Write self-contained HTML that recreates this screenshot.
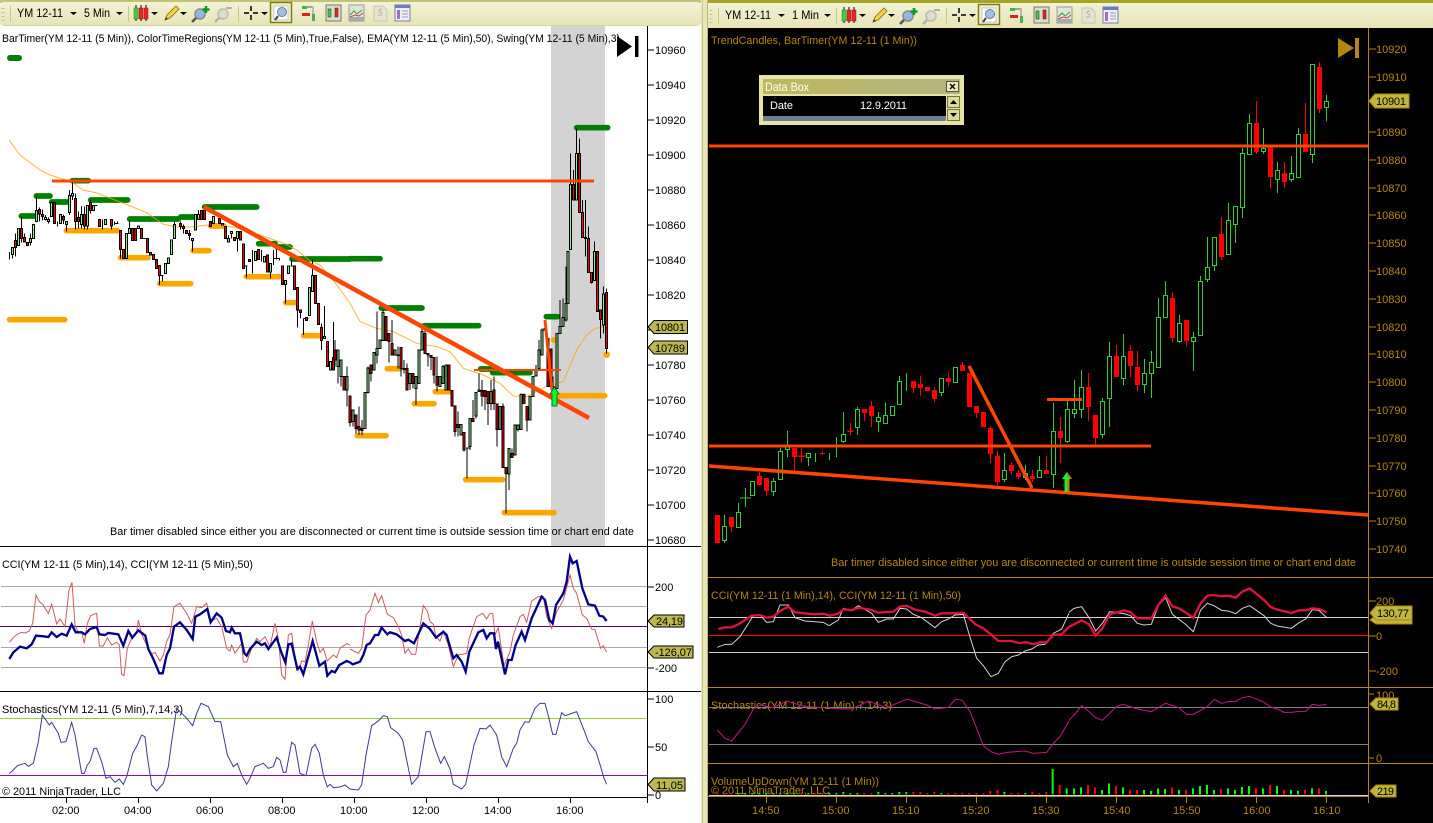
<!DOCTYPE html>
<html><head><meta charset="utf-8"><title>Charts</title>
<style>
html,body{margin:0;padding:0;background:#fff;width:1433px;height:823px;overflow:hidden}
svg{display:block}
text{font-family:"Liberation Sans",sans-serif;font-size:11px}
.g text{fill:#b8860b}
.k text{fill:#000}
.t text{font-size:12px}
</style></head><body>
<svg width="1433" height="823" viewBox="0 0 1433 823" xmlns="http://www.w3.org/2000/svg">
<defs>
<linearGradient id="tb" x1="0" y1="0" x2="0" y2="1"><stop offset="0" stop-color="#f3f2d6"/><stop offset="1" stop-color="#e6e4b6"/></linearGradient>
<linearGradient id="ttl" x1="0" y1="0" x2="1" y2="0"><stop offset="0" stop-color="#bdb95a"/><stop offset="1" stop-color="#b4b383"/></linearGradient>
<g id="tools">
<path d="M3 8v1M3 12v1M3 16v1M3 20v1" stroke="#c4c27e" stroke-width="3" fill="none"/>
<path d="M10.500 6V22M128.500 6V22M238.500 6V22" stroke="#c9c78c" fill="none"/>
<path d="M70 12h7l-3.500 3zM116 12h7l-3.500 3zM151 12h7l-3.500 3zM180 12h7l-3.500 3zM261 12h7l-3.500 3z" fill="#000"/>
<path d="M136 5V21M141 5V21M146 5V21" stroke="#000"/>
<rect x="134" y="8" width="4" height="11" fill="#3fd23f" stroke="#1a7a1a" stroke-width=".5"/><rect x="139" y="8" width="4" height="11" fill="#ee2222" stroke="#7a1a1a" stroke-width=".5"/><rect x="144" y="8" width="4" height="11" fill="#ee2222" stroke="#7a1a1a" stroke-width=".5"/>
<path d="M165 20l2-5 9-9 3 3-9 9z" fill="#f5d33a" stroke="#8a6a10" stroke-width=".8"/><path d="M165 20l1-3 2 2z" fill="#333"/>
<circle cx="200" cy="14" r="5" fill="#8fb8e8" stroke="#8a8a8a" stroke-width="1.500"/><path d="M196 18l-4 4" stroke="#555" stroke-width="2.500"/><path d="M206 6v7M202.500 9.500h7" stroke="#0a9a2a" stroke-width="2.500"/>
<circle cx="223" cy="14" r="5" fill="#dcdcd0" stroke="#bcbcb0" stroke-width="1.500"/><path d="M219 18l-4 4" stroke="#b0b0a8" stroke-width="2.500"/><path d="M226 8h6" stroke="#b0b0a8" stroke-width="2"/>
<path d="M244 13h5M253 13h5M251 6v5M251 15v5" stroke="#000" stroke-width="1.500"/>
<rect x="270.500" y="2.500" width="21" height="20" fill="#efeedd" stroke="#808000" stroke-width="1.500"/>
<rect x="274" y="6" width="14" height="14" fill="#fff" stroke="#aaa" stroke-width=".6"/><circle cx="282" cy="12" r="4.500" fill="#9fc0ea" stroke="#777"/><path d="M278 16l-3 4" stroke="#444" stroke-width="2"/>
<rect x="302" y="6" width="5" height="3" fill="#3fb83f"/><path d="M307 7h5" stroke="#555"/><rect x="302" y="13" width="8" height="3" fill="#dd2222"/><rect x="312" y="14" width="3" height="7" fill="#3fb83f"/><path d="M313 6V21" stroke="#888"/>
<rect x="326" y="5" width="15" height="16" fill="#dcdcc8" stroke="#777"/><rect x="328" y="9" width="3" height="8" fill="#3fd23f" stroke="#222" stroke-width=".5"/><rect x="335" y="8" width="3" height="9" fill="#ee2222" stroke="#222" stroke-width=".5"/>
<rect x="349" y="5" width="15" height="16" fill="#dfe6d8" stroke="#999"/><path d="M350 15l4-4 3 3 5-4" stroke="#3a9a3a" fill="none"/><path d="M350 17l5-2 4 1 4-3" stroke="#cc4444" fill="none"/><rect x="349" y="17" width="15" height="4" fill="#aaa"/>
<path d="M374 6h9l4 4v11h-13z" fill="#e5e4d2" stroke="#c6c6b4"/><path d="M382 9.500c-3-1-4 1-2 2.500 3 1 2 4-2 3" stroke="#bcbcaa" fill="none" stroke-width="1.300"/>
<rect x="395" y="5" width="15" height="16" fill="#eef0ff" stroke="#7a7aa8"/><rect x="395" y="5" width="15" height="3" fill="#6a7ac8"/><rect x="397" y="10" width="3" height="9" fill="#a070c8"/><path d="M402 11h6M402 14h6M402 17h6" stroke="#99a"/>
</g>
</defs>

<!-- base -->
<rect width="1433" height="823" fill="#fff"/>
<rect x="701" width="7" height="823" fill="#e8e6b8"/>
<rect x="702" width="1" height="823" fill="#c9c68a"/><rect x="707" width="1" height="823" fill="#bdb76b"/>
<rect x="708" width="725" height="823" fill="#000"/>

<!-- left toolbar -->
<rect width="701" height="3" fill="#c4c274"/>
<rect y="2" width="701" height="24" rx="4" fill="url(#tb)"/>
<path d="M4 25.500H697" stroke="#d8d6a0"/>
<use href="#tools"/>
<g class="k t"><text x="17" y="17" textLength="46" lengthAdjust="spacingAndGlyphs">YM 12-11</text><text x="84" y="17" textLength="26" lengthAdjust="spacingAndGlyphs">5 Min</text></g>

<!-- right toolbar -->
<rect x="708" width="725" height="3" fill="#a8a428"/>
<rect x="708" y="3" width="725" height="25" fill="url(#tb)"/>
<use href="#tools" x="708" y="2"/>
<g class="k t"><text x="725" y="19" textLength="46" lengthAdjust="spacingAndGlyphs">YM 12-11</text><text x="792" y="19" textLength="27" lengthAdjust="spacingAndGlyphs">1 Min</text></g>
<rect x="708" y="28" width="725" height="795" fill="#000"/>

<!-- LEFT CHART -->
<rect x="551" y="26" width="54" height="520" fill="#d3d3d3"/>
<g class="k">
<text x="2" y="42" textLength="618" lengthAdjust="spacingAndGlyphs">BarTimer(YM 12-11  (5 Min)), ColorTimeRegions(YM 12-11  (5 Min),True,False), EMA(YM 12-11  (5 Min),50), Swing(YM 12-11  (5 Min),3)</text>
<text x="110" y="535" textLength="524" lengthAdjust="spacingAndGlyphs">Bar timer disabled since either you are disconnected or current time is outside session time or chart end date</text>
<text x="2" y="568" textLength="251" lengthAdjust="spacingAndGlyphs">CCI(YM 12-11 (5 Min),14), CCI(YM 12-11 (5 Min),50)</text>
<text x="2" y="713" textLength="181" lengthAdjust="spacingAndGlyphs">Stochastics(YM 12-11 (5 Min),7,14,3)</text>
<text x="2" y="795" textLength="119" lengthAdjust="spacingAndGlyphs">© 2011 NinjaTrader, LLC</text>
</g>
<path d="M617 36l15 10.500-15 10.500z M635 36h3.500v21h-3.500z" fill="#000"/>
<path d="M10 58H19" stroke="#008000" stroke-width="6" stroke-linecap="round"/>

<!-- panel lines -->
<path d="M0 546.500H701M0 691.500H701M0 797.500H648M647.500 26V803" stroke="#000" fill="none"/>
<path d="M647 50h7M647 85h7M647 120h7M647 155h7M647 190h7M647 225h7M647 260h7M647 295h7M647 330h7M647 365h7M647 400h7M647 435h7M647 470h7M647 505h7M647 540h7M647 587h7M647 668h7M647 699h7M647 747h7M647 795h7M66.500 797v6M138.500 797v6M210.500 797v6M282.500 797v6M354.500 797v6M426.500 797v6M498.500 797v6M570.500 797v6" stroke="#000" fill="none"/>
<g class="k">
<text x="655" y="54">10960</text><text x="655" y="89">10940</text><text x="655" y="124">10920</text><text x="655" y="159">10900</text><text x="655" y="194">10880</text><text x="655" y="229">10860</text><text x="655" y="264">10840</text><text x="655" y="299">10820</text><text x="655" y="369">10780</text><text x="655" y="404">10760</text><text x="655" y="439">10740</text><text x="655" y="474">10720</text><text x="655" y="509">10700</text><text x="655" y="544">10680</text>
<text x="655" y="591">200</text><text x="655" y="672">-200</text><text x="655" y="703">100</text><text x="655" y="751">50</text><text x="655" y="799">0</text>
<text x="52" y="814">02:00</text><text x="124" y="814">04:00</text><text x="196" y="814">06:00</text><text x="268" y="814">08:00</text><text x="340" y="814">10:00</text><text x="412" y="814">12:00</text><text x="484" y="814">14:00</text><text x="556" y="814">16:00</text>
</g>

<!-- swing lines left: zoom3 space -->
<g transform="translate(0 170) scale(.33333)" fill="none" stroke-linecap="round" stroke-width="17">
<path stroke="#ffa500" d="M199 182H352M362 263H444M479 341H572M579 242H627M632 168H672M739 320H838M857 398H885M911 497H955M29 449H194"/>
<path stroke="#008000" d="M64 138H105M109 78H150M155 96H205M217 32H265M272 90H383M389 147H535M542 141H610M614 111H770M776 221H825M832 231H870M876 267H1050"/>
</g>
<g transform="translate(350 120) scale(.33333)" fill="none" stroke-linecap="round" stroke-width="17">
<path stroke="#ffa500" d="M112 746H150M193 851H252M256 815H298M22 947H108M347 1079H458M463 1178H612M625 827H764M610 660h4"/>
<path stroke="#008000" d="M0 416H90M94 564H216M222 617H386M392 747H430M428 758H540M589 590H622M680 23H773"/>
<circle cx="770" cy="704" r="4" fill="#ffa500" stroke="#ffa500" stroke-width="12"/>
</g>
<path d="M9 140L20 155L40 170L50 175L72 182L83 190L97 193L107 197L133 207L147 213L163 224L177 227L190 227L207 225L233 227L260 235L283 243L297 250L310 261L320 265L333 280L350 303" fill="none" stroke="#ffa500" stroke-opacity=".8"/>
<path transform="translate(350 120) scale(.33333)" d="M0 550L30 605L80 625L130 635L200 670L260 680L300 695L340 745L400 765L450 790L490 828L530 830L585 800L640 785L680 690L710 645L735 625L770 620" fill="none" stroke="#ffa500" stroke-width="3" stroke-opacity=".8"/>

<!-- left candles zoom3 -->
<g transform="translate(0 170) scale(.33333)" stroke="#000" stroke-width="3" shape-rendering="crispEdges">
<path fill="none" d="M28 246V268M37 232V266M46 190V260M55 176V226M64 140V218M73 190V218M82 218V226M91 190V226M100 164V205M109 80V155M118 112V155M127 118V152M136 135V152M145 142V160M154 97V140M163 97V160M172 155V170M181 133V160M190 133V162M199 154V185M208 60V135M217 38V90M226 70V178M235 125V175M244 108V175M253 110V178M262 106V178M271 90V130M280 106V122M298 148V170M307 148V178M316 148V163M334 148V178M343 155V165M352 155V162M361 181V265M370 238V265M379 190V265M388 150V190M397 176V211M406 176V211M415 168V176M424 176V205M442 205V248M451 248V255M460 253V268M469 268V295M478 286V345M487 316V335M496 280V310M505 264V280M514 210V254M523 155V205M541 155V178M550 163V190M559 181V190M568 180V210M577 211V244M586 133V180M595 120V150M604 122V148M613 122V148M631 155V170M640 140V160M658 145V160M667 160V165M676 170V205M685 195V218M694 185V205M703 203V211M712 185V245M721 185V210M730 222V295M739 288V322M748 268V274M757 240V310M766 245V272M775 238V268M784 240V275M793 260V276M802 255V306M811 280V325M820 240V285M829 238V268M838 265V272M847 288V343M856 332V400M865 288V311M874 270V290M883 288V358M892 352V472M901 420V445M910 445V495M919 442V452M928 352V436M937 268V365M946 316V400M955 400V463M964 460V540M973 408V505M982 514V590M991 574V600M1000 456V600M280 106H293M343 160H356M730 288H743M820 265H840M424 205H445M478 316H490M871 288H880M910 445H925"/>
<path fill="#90ee90" d="M34 232h6V254h-6zM52 176h6V226h-6zM88 205h6V218h-6zM97 164h6V205h-6zM106 122h6V155h-6zM133 142h6V148h-6zM142 149h6V155h-6zM151 97h6V140h-6zM178 133h6V160h-6zM196 154h6V163h-6zM205 76h6V128h-6zM214 70h6V78h-6zM241 133h6V163h-6zM259 106h6V168h-6zM277 106h6V122h-6zM313 148h6V163h-6zM376 190h6V265h-6zM385 176h6V190h-6zM412 168h6V176h-6zM493 280h6V310h-6zM502 264h6V280h-6zM511 210h6V254h-6zM520 163h6V205h-6zM574 205h6V211h-6zM583 133h6V180h-6zM592 133h6V148h-6zM637 140h6V160h-6zM664 160h6V165h-6zM682 205h6V216h-6zM691 185h6V190h-6zM709 185h6V205h-6zM763 245h6V272h-6zM790 260h6V276h-6zM808 280h6V306h-6zM853 332h6V343h-6zM862 288h6V311h-6zM925 352h6V436h-6zM934 316h6V365h-6zM970 500h6V505h-6zM988 574h6V600h-6z"/>
<path fill="#f00" d="M43 212h6V232h-6zM61 176h6V205h-6zM70 202h6V216h-6zM79 218h6V226h-6zM115 118h6V132h-6zM124 133h6V139h-6zM160 97h6V160h-6zM187 140h6V150h-6zM223 85h6V155h-6zM232 142h6V155h-6zM250 133h6V168h-6zM268 97h6V122h-6zM295 148h6V170h-6zM331 148h6V168h-6zM358 181h6V238h-6zM367 238h6V265h-6zM394 176h6V211h-6zM403 176h6V211h-6zM421 176h6V205h-6zM439 205h6V248h-6zM448 248h6V255h-6zM457 253h6V268h-6zM466 268h6V295h-6zM475 286h6V316h-6zM538 160h6V170h-6zM547 170h6V176h-6zM556 181h6V190h-6zM565 190h6V196h-6zM601 122h6V148h-6zM610 122h6V148h-6zM628 155h6V170h-6zM655 145h6V160h-6zM673 170h6V205h-6zM700 203h6V211h-6zM718 185h6V210h-6zM727 222h6V295h-6zM745 268h6V274h-6zM772 238h6V268h-6zM799 255h6V306h-6zM844 288h6V343h-6zM880 288h6V358h-6zM889 352h6V420h-6zM898 420h6V428h-6zM916 442h6V452h-6zM943 316h6V400h-6zM952 400h6V463h-6zM961 472h6V512h-6zM979 514h6V590h-6zM997 562h6V600h-6z"/>
</g>
<!-- left candles zoom4 -->
<g transform="translate(350 120) scale(.33333)" stroke="#000" stroke-width="3" shape-rendering="crispEdges">
<path fill="none" d="M-45 660V740M-36 700V790M-27 730V800M-18 770V810M-9 740V860M0 828V920M9 870V920M18 885V940M27 860V945M36 900V945M45 818V925M54 740V820M63 735V785M72 697V750M81 575V730M90 660V686M99 570V662M108 590V662M117 640V728M126 600V705M135 690V705M144 680V745M153 682V770M162 720V760M171 730V810M180 760V810M189 760V805M198 770V855M207 690V790M216 625V690M225 625V700M234 700V740M243 706V750M252 712V790M261 710V815M270 770V800M279 735V790M288 735V810M297 735V810M306 812V858M315 858V950M324 875V950M333 914V945M342 938V995M351 984V1075M360 895V990M369 840V905M378 818V895M387 760V815M396 780V860M405 812V870M414 815V915M423 780V870M432 770V870M441 852V980M450 860V928M459 850V1042M468 1042V1180M477 985V1110M486 985V1012M495 915V1005M504 915V935M513 820V928M522 820V850M531 860V935M540 830V900M549 770V830M558 735V768M567 660V745M576 625V705M585 625V630M594 655V800M603 687V800M609 770V825M621 640V805M630 540V640M639 535V620M648 440V605M654 395V550M662 100V388M671 150V240M680 25V240M689 55V278M698 240V352M707 240V410M716 320V458M725 458V490M734 365V482M743 395V575M752 570V655M761 500V640M770 505V700M348 984H360"/>
<path fill="#90ee90" d="M-39 690h6V740h-6zM-30 720h6V770h-6zM-12 770h6V810h-6zM6 870h6V905h-6zM42 818h6V925h-6zM51 744h6V818h-6zM69 697h6V750h-6zM78 686h6V705h-6zM87 660h6V686h-6zM96 578h6V662h-6zM132 690h6V705h-6zM177 760h6V790h-6zM195 770h6V805h-6zM204 690h6V790h-6zM213 635h6V690h-6zM267 770h6V800h-6zM276 740h6V790h-6zM285 735h6V810h-6zM330 914h6V945h-6zM357 895h6V980h-6zM375 818h6V888h-6zM384 810h6V815h-6zM420 815h6V850h-6zM447 860h6V928h-6zM474 985h6V1062h-6zM492 915h6V1005h-6zM501 915h6V928h-6zM510 824h6V928h-6zM537 830h6V900h-6zM546 770h6V830h-6zM555 748h6V768h-6zM564 690h6V745h-6zM573 630h6V705h-6zM582 625h6V630h-6zM618 640h6V805h-6zM627 620h6V640h-6zM636 592h6V620h-6zM645 550h6V600h-6zM651 395h6V550h-6zM659 193h6V388h-6zM677 100h6V240h-6zM731 395h6V482h-6zM758 522h6V615h-6z"/>
<path fill="#f00" d="M-48 690h6V720h-6zM-21 770h6V810h-6zM-3 828h6V908h-6zM15 885h6V925h-6zM24 920h6V930h-6zM33 925h6V932h-6zM60 735h6V760h-6zM105 590h6V662h-6zM114 640h6V665h-6zM123 670h6V705h-6zM141 705h6V707h-6zM150 682h6V745h-6zM159 745h6V748h-6zM168 745h6V810h-6zM186 760h6V790h-6zM222 640h6V700h-6zM231 700h6V705h-6zM240 706h6V712h-6zM249 712h6V765h-6zM258 770h6V795h-6zM294 735h6V810h-6zM303 812h6V858h-6zM312 858h6V935h-6zM321 914h6V922h-6zM339 938h6V990h-6zM366 895h6V905h-6zM393 812h6V828h-6zM402 812h6V830h-6zM411 815h6V850h-6zM429 810h6V850h-6zM438 852h6V928h-6zM456 860h6V1042h-6zM465 1042h6V1060h-6zM483 1000h6V1012h-6zM519 824h6V850h-6zM528 860h6V900h-6zM591 655h6V800h-6zM600 687h6V800h-6zM606 800h6V825h-6zM668 193h6V240h-6zM686 100h6V278h-6zM695 278h6V352h-6zM704 352h6V355h-6zM713 355h6V458h-6zM722 458h6V488h-6zM740 395h6V575h-6zM749 570h6V598h-6zM767 518h6V685h-6z"/>
</g>
<!-- trendlines + arrow left -->
<g stroke="#ff4500" fill="none">
<path d="M52 181H594" stroke-width="3"/>
<path d="M204 207L589 418" stroke-width="4.500"/>
<path d="M545 320L552 390" stroke-width="3"/>
<path d="M474 370H561" stroke-width="2"/>
</g>
<path d="M550 394l4.500-7 4.500 7h-2v12h-5v-12z" fill="#00ff33" stroke="#005a18" stroke-width=".8"/>
<!-- left CCI / stoch -->
<g transform="translate(0 545) scale(.33333)" fill="none">
<path stroke="#a9a9a9" stroke-width="3" d="M3 124.500H1941M3 184.500H1941M3 307.500H1941M3 367.500H1941"/>
<path stroke="#4b0082" stroke-width="3" d="M0 244.500H1941"/>
<path stroke="#9acd32" stroke-width="3" d="M0 520.500H1941"/>
<path stroke="#9400d3" stroke-width="3" d="M0 691.500H1941"/>
<path stroke="#cd5c5c" stroke-width="3" d="M28 292L40 278L52 268L64 262L76 264L88 258L98 235L108 150L118 170L128 178L145 205L155 177L170 237L180 222L195 245L207 135L216 112L225 240L235 262L245 262L253 295L262 235L272 212L290 205L298 303L310 303L322 278L335 300L350 292L358 300L365 388L372 392L382 310L395 280L410 262L415 225L425 268L440 300L455 328L465 322L480 348L490 330L500 290L510 268L522 185L540 175L560 205L575 235L590 185L605 188L620 175L632 228L650 220L665 245L680 310L690 318L695 300L705 325L725 295L730 350L740 352L755 310L770 280L780 290L795 275L810 305L825 235L835 280L845 390L855 403L865 270L875 265L885 340L895 375L905 348L915 350L925 300L937 228L950 290L960 322L970 310L982 348L1000 330L1010 338L1020 310L1040 296L1050 300"/>
<path stroke="#00008b" stroke-width="7" d="M28 342L40 322L60 305L80 310L95 298L108 272L130 274L145 276L155 262L170 276L185 266L200 272L215 238L227 262L245 262L255 268L270 252L290 246L298 268L315 270L325 264L355 268L370 302L385 258L397 278L415 256L436 272L445 312L460 342L478 385L488 385L500 330L510 310L522 245L540 232L560 255L578 282L586 215L600 208L622 192L632 232L650 205L665 218L678 258L690 262L695 248L705 265L720 265L733 325L740 332L750 312L770 290L785 300L795 295L805 312L830 278L845 325L856 352L865 298L875 296L892 372L900 365L910 388L938 288L958 362L975 350L982 392L995 378L1005 382L1018 360L1040 348L1050 352"/>
<path stroke="#3a3a96" stroke-width="3" d="M28 685L40 675L52 662L75 655L85 664L100 655L115 590L127 510L148 540L155 532L175 565L183 592L198 590L215 532L225 570L245 685L253 685L262 660L270 650L282 610L290 610L305 650L318 700L330 695L345 712L358 702L370 718L380 695L398 625L412 600L425 570L435 575L442 635L455 720L470 738L490 715L505 665L515 590L530 490L545 505L560 520L578 542L590 505L603 475L625 485L645 530L662 530L682 630L700 665L712 655L725 690L740 718L750 700L765 665L790 655L805 670L820 665L830 637L840 645L850 682L858 682L875 592L885 600L900 685L918 692L935 610L945 598L958 625L970 690L982 726L990 718L1000 728L1020 726L1035 720L1050 732"/>
</g>
<g transform="translate(350 545) scale(.33333)" fill="none">
<path stroke="#cd5c5c" stroke-width="3" d="M0 312L25 325L35 310L48 210L60 195L75 145L85 172L95 152L112 208L130 218L145 245L155 270L165 325L175 312L185 328L197 328L220 182L232 198L240 230L250 238L258 275L270 288L280 260L295 300L310 365L325 330L350 325L358 278L380 215L398 205L410 222L420 205L428 205L435 270L445 248L462 362L480 320L490 270L510 215L520 208L530 232L545 168L565 155L580 155L590 215L605 250L620 200L640 165L660 90L670 130L680 145L697 210L710 220L725 252L735 255L752 310L760 302L770 322"/>
<path stroke="#00008b" stroke-width="7" d="M0 352L8 358L30 350L40 330L50 300L60 295L75 270L85 270L95 248L112 268L120 262L140 268L165 288L175 284L192 295L220 235L240 252L258 278L280 260L290 270L297 295L310 340L320 330L335 350L347 380L358 320L385 262L400 255L410 280L420 265L432 265L438 312L444 290L465 388L475 345L485 345L497 300L515 260L525 285L545 220L575 155L585 165L598 225L608 235L618 180L640 145L650 110L660 35L668 55L680 48L697 130L715 178L735 182L748 212L760 215L770 228"/>
<path stroke="#3a3a96" stroke-width="3" d="M0 732L25 735L35 720L48 630L65 542L85 528L100 512L112 515L122 548L145 565L158 585L172 655L185 718L205 695L228 560L240 560L255 610L272 655L283 635L300 672L310 718L335 732L347 718L372 600L390 550L408 552L420 540L440 570L455 635L470 665L490 610L500 595L510 555L525 530L537 532L555 490L570 475L585 475L597 520L608 568L618 568L635 503L645 512L680 500L700 550L715 590L738 620L752 665L762 700L770 718"/>
</g>
<!-- left tags -->
<g stroke="#000" fill="#bdb950">
<path d="M648 327l6-6.500h33.500v13H654z"/><path d="M648 347.500l6-6.500h33.500v13H654z"/>
<path d="M648 621l6-6h30v12H654z"/><path d="M648 652l6-6h39v12H654z"/><path d="M648 784.500l6-6.500h31v13H654z"/>
</g>
<g class="k"><text x="655" y="331" textLength="30">10801</text><text x="655" y="352" textLength="30">10789</text><text x="656" y="625" textLength="27">24,19</text><text x="655" y="656" textLength="37">-126,07</text><text x="656" y="789" textLength="27">11,05</text></g>

<!-- RIGHT CHART -->
<g class="g">
<text x="711" y="44" textLength="206" lengthAdjust="spacingAndGlyphs">TrendCandles, BarTimer(YM 12-11 (1 Min))</text>
<text x="831" y="566" textLength="525" lengthAdjust="spacingAndGlyphs">Bar timer disabled since either you are disconnected or current time is outside session time or chart end date</text>
<text x="711" y="599" textLength="250" lengthAdjust="spacingAndGlyphs">CCI(YM 12-11 (1 Min),14), CCI(YM 12-11 (1 Min),50)</text>
<text x="711" y="709" textLength="181" lengthAdjust="spacingAndGlyphs">Stochastics(YM 12-11 (1 Min),7,14,3)</text>
<text x="711" y="785" textLength="168" lengthAdjust="spacingAndGlyphs">VolumeUpDown(YM 12-11 (1 Min))</text>
<text x="711" y="794" textLength="119" lengthAdjust="spacingAndGlyphs">© 2011 NinjaTrader, LLC</text>
<text x="1376" y="53">10920</text><text x="1376" y="81">10910</text><text x="1376" y="136">10890</text><text x="1376" y="164">10880</text><text x="1376" y="192">10870</text><text x="1376" y="219">10860</text><text x="1376" y="247">10850</text><text x="1376" y="275">10840</text><text x="1376" y="303">10830</text><text x="1376" y="331">10820</text><text x="1376" y="358">10810</text><text x="1376" y="386">10800</text><text x="1376" y="414">10790</text><text x="1376" y="442">10780</text><text x="1376" y="470">10770</text><text x="1376" y="497">10760</text><text x="1376" y="525">10750</text><text x="1376" y="553">10740</text>
<text x="1376" y="605">200</text><text x="1376" y="640">0</text><text x="1376" y="675">-200</text><text x="1376" y="699">100</text><text x="1376" y="762">0</text>
<text x="752" y="814">14:50</text><text x="822" y="814">15:00</text><text x="892" y="814">15:10</text><text x="962" y="814">15:20</text><text x="1032" y="814">15:30</text><text x="1103" y="814">15:40</text><text x="1173" y="814">15:50</text><text x="1243" y="814">16:00</text><text x="1313" y="814">16:10</text>
</g>
<path d="M1338 38l16 10-16 10z M1355 38h4v20h-4z" fill="#b8860b"/>
<path d="M708 577.500H1433M708 687.500H1433M708 763.500H1433M708 796.500H1369M1368.500 28V803M1368 49h8M1368 77h8M1368 132h8M1368 160h8M1368 188h8M1368 215h8M1368 243h8M1368 271h8M1368 299h8M1368 327h8M1368 354h8M1368 382h8M1368 410h8M1368 438h8M1368 466h8M1368 493h8M1368 521h8M1368 549h8M1368 601h8M1368 636h8M1368 671h8M1368 694h6M1368 758h6M766.500 797v6M836.500 797v6M906.500 797v6M976.500 797v6M1046.500 797v6M1116.500 797v6M1186.500 797v6M1256.500 797v6M1326.500 797v6" stroke="#b8860b" fill="none"/>
<!-- right candles -->
<g shape-rendering="crispEdges" fill="none">
<path stroke="#32cd32" d="M724.500 515V543M738.500 503V527M745.500 488V507M752.500 481V495M773.500 478V496M780.500 448V479M787.500 431V457M808.500 453V466M815.500 453V462M829.500 453V460M836.500 437V457M843.500 412V443M857.500 407V435M878.500 412V432M885.500 403V423M892.500 406V415M899.500 376V404M906.500 373V391M941.500 378V396M955.500 367V382M1004.500 453V482M1025.500 465V480M1039.500 456V477M1053.500 403V488M1067.500 400V443M1074.500 380V418M1081.500 370V418M1102.500 398V438M1109.500 342V427M1123.500 334V385M1144.500 359V393M1151.500 351V398M1158.500 298V367M1165.500 281V317M1179.500 315V343M1193.500 332V371M1200.500 276V335M1207.500 237V282M1214.500 237V271M1228.500 203V254M1235.500 206V243M1242.500 148V218M1249.500 114V154M1263.500 128V154M1277.500 162V193M1291.500 156V182M1298.500 128V177M1312.500 64V163M1326.500 95V121M740 498H751M808 456h1"/>
<path stroke="#32cd32" fill="#000" d="M722.500 526.500h4V540.500h-4zM736.500 512.500h4V527.500h-4zM750.500 481.500h4V495.500h-4zM771.500 481.500h4V491.500h-4zM778.500 451.500h4V479.500h-4zM785.500 446.500h4V449.500h-4zM806.500 453.500h4V457.500h-4zM841.500 434.500h4V441.500h-4zM855.500 409.500h4V427.500h-4zM876.500 417.500h4V421.500h-4zM883.500 415.500h4V423.500h-4zM890.500 406.500h4V415.500h-4zM897.500 381.500h4V404.500h-4zM939.500 378.500h4V392.500h-4zM953.500 367.500h4V382.500h-4zM1002.500 470.500h4V479.500h-4zM1023.500 473.500h4V477.500h-4zM1037.500 470.500h4V477.500h-4zM1051.500 431.500h4V474.500h-4zM1065.500 409.500h4V441.500h-4zM1072.500 409.500h4V413.500h-4zM1079.500 387.500h4V409.500h-4zM1100.500 401.500h4V434.500h-4zM1107.500 356.500h4V398.500h-4zM1121.500 356.500h4V378.500h-4zM1142.500 373.500h4V384.500h-4zM1149.500 362.500h4V373.500h-4zM1156.500 317.500h4V367.500h-4zM1163.500 295.500h4V317.500h-4zM1177.500 323.500h4V341.500h-4zM1191.500 337.500h4V341.500h-4zM1198.500 281.500h4V335.500h-4zM1205.500 267.500h4V279.500h-4zM1212.500 237.500h4V265.500h-4zM1226.500 220.500h4V254.500h-4zM1233.500 206.500h4V224.500h-4zM1240.500 153.500h4V207.500h-4zM1247.500 123.500h4V154.500h-4zM1261.500 148.500h4V151.500h-4zM1275.500 170.500h4V179.500h-4zM1289.500 173.500h4V179.500h-4zM1296.500 134.500h4V177.500h-4zM1310.500 64.500h4V154.500h-4zM1324.500 101.500h4V107.500h-4z"/>
<path stroke="#f00" d="M731.500 517V532M759.500 472V485M766.500 478V496M794.500 448V471M801.500 448V463M822.500 451V455M850.500 423V435M864.500 409V421M871.500 401V427M913.500 381V393M920.500 376V396M934.500 387V402M948.500 373V386M962.500 362V371M976.500 406V418M990.500 426V463M997.500 451V485M1011.500 462V474M1018.500 470V479M1032.500 470V482M1046.500 456V474M1060.500 417V463M1088.500 373V421M1095.500 415V446M1116.500 345V377M1130.500 345V377M1137.500 351V391M1172.500 292V343M1186.500 320V346M1221.500 217V260M1256.500 101V154M1270.500 147V188M1284.500 162V188M1305.500 103V152M1319.500 62V113M797 456h9M847 431h7"/>
<path fill="#f00" d="M715 515h5V543h-5zM729 517h5V527h-5zM757 476h5V485h-5zM764 478h5V491h-5zM792 448h5V457h-5zM799 456h5V457h-5zM820 453h5V454h-5zM848 431h5V432h-5zM862 409h5V413h-5zM869 406h5V416h-5zM911 381h5V388h-5zM918 384h5V388h-5zM925 387h5V391h-5zM932 390h5V399h-5zM946 378h5V382h-5zM960 365h5V371h-5zM967 373h5V407h-5zM974 406h5V413h-5zM981 412h5V427h-5zM988 428h5V454h-5zM995 456h5V482h-5zM1009 465h5V471h-5zM1016 473h5V477h-5zM1030 476h5V479h-5zM1044 470h5V474h-5zM1058 431h5V438h-5zM1086 387h5V407h-5zM1093 415h5V438h-5zM1114 356h5V377h-5zM1128 351h5V366h-5zM1135 367h5V385h-5zM1170 298h5V338h-5zM1184 320h5V341h-5zM1219 234h5V257h-5zM1254 123h5V152h-5zM1268 147h5V177h-5zM1282 173h5V182h-5zM1303 134h5V152h-5zM1317 67h5V109h-5z"/>
</g>
<g stroke="#ff4500" fill="none">
<path d="M709 146H1368" stroke-width="3"/>
<path d="M709 446H1151" stroke-width="3"/>
<path d="M709 466L1368 515" stroke-width="3.500"/>
<path d="M969 366L1032 488" stroke-width="3.500"/>
<path d="M1047 399.500H1082" stroke-width="3"/>
</g>
<path d="M1062 479l5-7 5 7h-2.500v13h-5v-13z" fill="#00ff33"/><path d="M1067 472l5 7h-2.500v13H1067z" fill="#b8860b"/><path d="M1067 476l2 3v1h-2z" fill="#00ff33"/>
<!-- right indicators -->
<g transform="translate(705 575) scale(.33333)" fill="none">
<path stroke="#d3d3d3" stroke-width="3" d="M12 127.500H1990M12 232.500H1990"/>
<path stroke="#f00" stroke-width="3" d="M12 181.500H1990"/>
<path stroke="#808080" stroke-width="3" d="M12 397.500H1990M12 508.500H1990"/>
<path stroke="#d3d3d3" stroke-width="3" d="M37 217L60 208L80 208L105 185L145 122L165 120L185 142L205 140L225 90L250 90L270 128L300 138L355 142L372 152L400 135L415 100L440 105L460 92L500 115L520 142L545 132L565 132L585 100L605 102L625 118L650 128L690 158L710 140L730 132L750 120L775 118L790 170L815 250L835 272L858 305L880 295L900 260L920 245L940 240L960 228L980 222L1000 210L1020 208L1045 175L1070 162L1092 115"/>
<path stroke="#dc143c" stroke-width="7" d="M40 162L60 157L80 157L100 148L140 122L165 120L185 128L205 125L225 108L250 95L270 112L300 115L330 118L355 116L375 122L400 116L415 103L440 106L460 98L500 105L520 113L565 110L585 95L605 92L630 104L660 110L690 122L710 115L750 115L775 113L810 147L835 160L860 180L880 198L920 198L940 204L965 202L985 208L1005 202L1025 202L1045 180L1070 178L1092 155"/>
<path stroke="#c71585" stroke-width="3" d="M37 465L60 490L80 498L120 448L145 402L165 390L205 398L245 378L300 395L355 398L410 402L440 402L490 378L545 398L605 372L665 390L690 402L730 397L752 372L772 376L795 410L815 460L835 512L858 530L880 538L905 532L960 528L985 535L1025 532L1045 505L1065 485L1092 438"/>
<path stroke="#f00" stroke-width="6" d="M37 658V652M58 658V654M79 658V654M289 658V654M331 658V654M352 658V654M478 658V654M499 658V654M625 658V651M646 658V651M667 658V654M688 658V651M730 658V654M751 658V654M772 658V654M793 658V654M814 658V654M835 658V654M856 658V648M877 658V645M919 658V654M940 658V654M982 658V651M1003 658V654M1024 658V651M1064 658V630"/>
<path stroke="#0f0" stroke-width="6" d="M100 658V654M121 658V654M142 658V654M163 658V654M184 658V654M205 658V654M226 658V654M247 658V654M268 658V654M310 658V654M373 658V654M394 658V654M415 658V651M436 658V654M457 658V654M520 658V651M541 658V654M562 658V654M583 658V651M604 658V651M709 658V654M898 658V651M961 658V654M1043 658V582M1085 658V640"/>
<path stroke="#d3d3d3" stroke-width="3" d="M12 661.500H1990"/>
</g>
<g transform="translate(1069 575) scale(.33333)" fill="none">
<path stroke="#d3d3d3" stroke-width="3" d="M0 112L15 100L38 95L60 128L80 168L100 145L122 110L165 116L185 122L205 145L225 150L247 148L268 92L290 68L310 118L350 148L373 170L395 105L415 85L435 92L458 106L478 108L500 116L520 100L542 92L585 122L605 145L625 153L667 160L690 143L710 132L730 104L750 106L772 127"/>
<path stroke="#dc143c" stroke-width="7" d="M0 155L15 148L38 136L60 148L80 182L100 160L122 118L165 106L185 112L205 130L247 130L268 90L290 62L310 94L330 100L373 128L395 85L415 62L435 60L458 64L478 62L500 68L520 50L542 40L585 75L605 96L625 104L667 114L690 106L710 106L730 100L750 102L772 112"/>
<path stroke="#c71585" stroke-width="3" d="M0 436L15 420L38 392L60 410L80 428L100 436L143 394L162 388L205 402L247 410L290 385L330 398L352 418L373 418L415 395L436 373L458 385L478 380L500 379L520 368L542 364L585 382L605 396L625 402L645 412L667 412L690 409L710 409L730 388L750 391L772 388"/>
<path stroke="#0f0" stroke-width="6" d="M15 658V640M36 658V637M99 658V645M120 658V625M162 658V637M225 658V645M246 658V648M267 658V640M288 658V642M330 658V645M372 658V640M393 658V633M414 658V630M435 658V645M477 658V640M498 658V645M519 658V636M540 658V633M582 658V640M624 658V633M666 658V645M687 658V648M729 658V640M771 658V648"/>
<path stroke="#f00" stroke-width="6" d="M57 658V630M78 658V637M141 658V633M183 658V645M204 658V645M309 658V637M351 658V645M456 658V642M561 658V640M603 658V630M645 658V645M708 658V645M750 658V640"/>
</g>
<!-- right tags -->
<g stroke="#b8860b" fill="#bdb73f">
<path d="M1369 101l6-7h34v14h-34z"/>
<path d="M1370 620l6-5h36v9h-36z"/>
<path d="M1370 613l6-7h36v14h-36z"/>
<path d="M1370 704l6-6h22v12h-22z"/>
<path d="M1370 791l6-6h20v12h-20z"/>
</g>
<g class="k"><text x="1376" y="105" textLength="30">10901</text><text x="1377" y="617" textLength="32">130,77</text><text x="1377" y="708" textLength="19">84,8</text><text x="1377" y="795" textLength="17">219</text></g>

<!-- Data box -->
<rect x="759" y="75" width="205" height="50" fill="#e6e4a8"/>
<rect x="763" y="79" width="197" height="15" fill="url(#ttl)"/>
<rect x="763" y="96" width="183" height="25" fill="#000"/>
<rect x="763" y="116" width="183" height="5" fill="#708090"/>
<text x="765" y="91" fill="#fff" style="font-size:12px" textLength="44" lengthAdjust="spacingAndGlyphs">Data Box</text>
<text x="770" y="109" fill="#fff" textLength="23">Date</text>
<text x="860" y="109" fill="#fff" textLength="47">12.9.2011</text>
<rect x="946.500" y="81.500" width="12" height="10" fill="#ece9c0" stroke="#55552a"/><path d="M950 84l5 5M955 84l-5 5" stroke="#000" stroke-width="1.300"/>
<rect x="947.500" y="96.500" width="12" height="11" fill="#dcda9a" stroke="#77773a"/><path d="M950 104h7l-3.500-4z" fill="#000"/>
<rect x="947.500" y="109.500" width="12" height="11" fill="#dcda9a" stroke="#77773a"/><path d="M950 113h7l-3.500 4z" fill="#000"/>
</svg>
</body></html>
